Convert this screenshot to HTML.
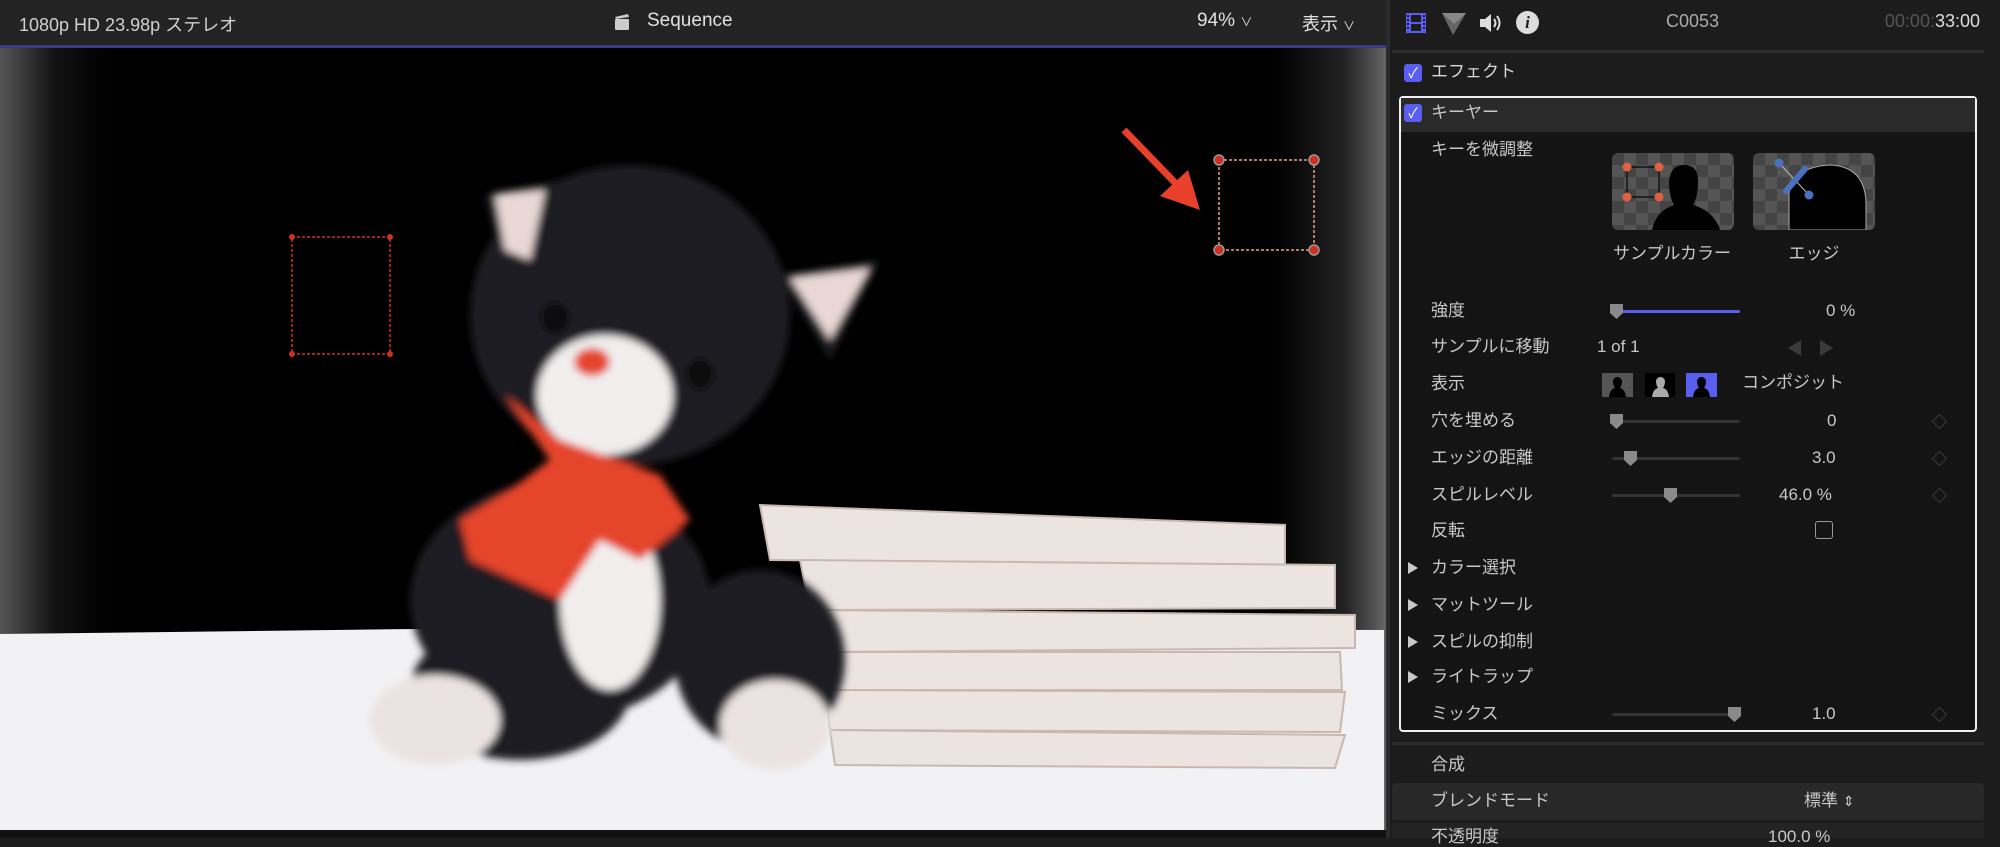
<!DOCTYPE html>
<html><head><meta charset="utf-8"><style>
*{margin:0;padding:0;box-sizing:border-box}
body{width:2000px;height:838px;background:#1c1c1c;overflow:hidden;position:relative;font-family:"Liberation Sans","Noto Sans CJK JP",sans-serif;color:#d8d8d8}
.a{position:absolute;white-space:nowrap}
.t{font-size:17px;color:#c8c8c8;line-height:20px}
.sl{position:absolute;height:3px;background:#333;border-radius:2px}
.th{position:absolute;width:13px;height:15px;background:#8a8a8a;clip-path:polygon(0 0,100% 0,100% 60%,50% 100%,0 60%)}
.dm{position:absolute;width:11px;height:11px;border:1px solid #3a3a3a;transform:rotate(45deg)}
.tri{position:absolute;width:0;height:0;border-top:6px solid transparent;border-bottom:6px solid transparent;border-left:10px solid #c8c8c8}
.cb{position:absolute;width:18px;height:18px;background:#5a5ef0;border-radius:3px;color:#fff;font-size:14px;line-height:18px;text-align:center}
</style></head><body>
<!-- top bar -->
<div class="a" style="left:0;top:0;width:1386px;height:44px;background:#232323"></div>
<div class="a" style="left:0;top:45px;width:1386px;height:3px;background:#3c3a80"></div>
<div class="a" style="left:19px;top:11px;font-size:18px;color:#d0d0d0">1080p HD 23.98p ステレオ</div>
<svg class="a" style="left:614px;top:13px" width="16" height="18"><rect x="1" y="6" width="14" height="11" rx="1" fill="#ccc"/><path d="M1 4 L14 1 L15 4 L2 6Z" fill="#ccc"/></svg>
<div class="a" style="left:647px;top:10px;font-size:19px;color:#e0e0e0">Sequence</div>
<div class="a" style="left:1197px;top:10px;font-size:19px;color:#e0e0e0">94% <span style="font-size:12px">∨</span></div>
<div class="a" style="left:1302px;top:10px;font-size:18px;color:#e0e0e0">表示 <span style="font-size:12px">∨</span></div>
<!-- video -->
<svg class="a" style="left:0;top:48px" width="1386" height="782" viewBox="0 48 1386 782">
<defs>
<linearGradient id="lg" x1="0" x2="1"><stop offset="0" stop-color="#555"/><stop offset="0.04" stop-color="#111"/><stop offset="0.08" stop-color="#000"/><stop offset="0.92" stop-color="#000"/><stop offset="0.97" stop-color="#222"/><stop offset="1" stop-color="#666"/></linearGradient>
<filter id="bl"><feGaussianBlur stdDeviation="4"/></filter>
</defs>
<rect x="0" y="48" width="1386" height="782" fill="url(#lg)"/>
<polygon points="0,634 500,628 1384,630 1384,830 0,830" fill="#f2f2f4"/>
<g fill="#ece4e0" stroke="#c8b8b0" stroke-width="2">
<polygon points="760,505 1285,525 1285,565 770,560"/>
<polygon points="800,560 1335,565 1335,608 810,610"/>
<polygon points="815,610 1355,615 1355,648 820,652"/>
<polygon points="820,652 1340,652 1342,690 825,690"/>
<polygon points="825,690 1345,692 1340,732 830,730"/>
<polygon points="830,730 1345,735 1335,768 835,765"/>
</g>
<g filter="url(#bl)">
<ellipse cx="560" cy="600" rx="150" ry="120" fill="#1b1c20"/>
<ellipse cx="520" cy="690" rx="110" ry="70" fill="#1b1c20"/>
<ellipse cx="760" cy="660" rx="85" ry="90" fill="#1b1c20"/>
<ellipse cx="630" cy="315" rx="160" ry="150" fill="#1e1f24"/>
<polygon points="485,195 560,180 540,270 500,260" fill="#1e1f24"/>
<polygon points="495,195 545,190 530,260 505,250" fill="#e9d8d6"/>
<polygon points="780,275 880,260 830,360" fill="#1e1f24"/>
<polygon points="790,278 870,268 830,340" fill="#e9d8d6"/>
<ellipse cx="605" cy="395" rx="68" ry="60" fill="#f2eeee"/>
<ellipse cx="610" cy="600" rx="50" ry="90" fill="#f2eeee"/>
<ellipse cx="592" cy="362" rx="18" ry="14" fill="#e5452c"/>
<ellipse cx="555" cy="318" rx="14" ry="16" fill="#111"/>
<ellipse cx="700" cy="374" rx="14" ry="16" fill="#111"/>
<polygon points="505,395 560,440 660,475 690,520 640,560 600,540 560,600 470,560 460,520 510,490 550,460" fill="#e5452c"/>
<ellipse cx="435" cy="720" rx="65" ry="45" fill="#ebe3e2"/>
<ellipse cx="775" cy="725" rx="55" ry="45" fill="#ebe3e2"/>
</g>
<rect x="292" y="237" width="98" height="117" fill="none" stroke="#d03020" stroke-width="1.5" stroke-dasharray="3 2"/>
<g fill="#d03020"><circle cx="292" cy="237" r="3"/><circle cx="390" cy="237" r="3"/><circle cx="292" cy="354" r="3"/><circle cx="390" cy="354" r="3"/></g>
<rect x="1219" y="160" width="95" height="90" fill="none" stroke="#e8a090" stroke-width="1.5" stroke-dasharray="3 2"/>
<g fill="#d03020" stroke="#999" stroke-width="1.5"><circle cx="1219" cy="160" r="5"/><circle cx="1314" cy="160" r="5"/><circle cx="1219" cy="250" r="5"/><circle cx="1314" cy="250" r="5"/></g>
<line x1="1124" y1="130" x2="1185" y2="193" stroke="#e8402a" stroke-width="7"/>
<polygon points="1200,210 1160,196 1188,170" fill="#e8402a"/>
</svg>
<div class="a" style="left:0;top:830px;width:1386px;height:8px;background:#111"></div>
<div class="a" style="left:1386px;top:0;width:4px;height:838px;background:#2a2a2a"></div>
<!-- panel header -->
<svg class="a" style="left:1405px;top:12px" width="22" height="22"><rect x="1" y="1" width="20" height="20" fill="#5a5ef0"/><g fill="#1c1c1c"><rect x="6" y="3" width="10" height="7"/><rect x="6" y="12" width="10" height="7"/><rect x="2" y="3" width="2" height="2"/><rect x="2" y="7" width="2" height="2"/><rect x="2" y="11" width="2" height="2"/><rect x="2" y="15" width="2" height="2"/><rect x="18" y="3" width="2" height="2"/><rect x="18" y="7" width="2" height="2"/><rect x="18" y="11" width="2" height="2"/><rect x="18" y="15" width="2" height="2"/></g></svg>
<svg class="a" style="left:1441px;top:12px" width="26" height="24"><polygon points="1,1 25,1 12,23" fill="#666"/><polygon points="1,1 25,1 13,12" fill="#888"/></svg>
<svg class="a" style="left:1478px;top:12px" width="26" height="22"><polygon points="2,7 7,7 13,2 13,20 7,15 2,15" fill="#ddd"/><path d="M16 7 Q19 11 16 15 M19 4 Q24 11 19 18" stroke="#ddd" stroke-width="2" fill="none"/></svg>
<div class="a" style="left:1516px;top:11px;width:23px;height:23px;border-radius:50%;background:#ddd;color:#1c1c1c;font:italic bold 17px 'Liberation Serif',serif;text-align:center;line-height:23px">i</div>
<div class="a" style="left:1666px;top:11px;font-size:18px;color:#aaa">C0053</div>
<div class="a" style="left:1875px;top:11px;font-size:18px;color:#ddd;width:105px;text-align:right"><span style="color:#555">00:00:</span>33:00</div>
<div class="a" style="left:1392px;top:50px;width:592px;height:3px;background:#2c2c2c"></div>
<div class="cb" style="left:1404px;top:64px">✓</div>
<div class="a t" style="left:1431px;top:62px;color:#d8d8d8">エフェクト</div>
<!-- keyer box -->
<div class="a" style="left:1399px;top:96px;width:578px;height:636px;border:2px solid #f0f0f0;border-radius:4px;background:#141414"></div>
<div class="a" style="left:1401px;top:98px;width:574px;height:34px;background:#2a2a2a"></div>
<div class="cb" style="left:1404px;top:104px">✓</div>
<div class="a t" style="left:1431px;top:103px">キーヤー</div>
<div class="a t" style="left:1431px;top:140px">キーを微調整</div>
<svg class="a" style="left:1612px;top:153px" width="122" height="77"><defs><pattern id="ck" width="24" height="24" patternUnits="userSpaceOnUse"><rect width="24" height="24" fill="#555"/><rect width="12" height="12" fill="#444"/><rect x="12" y="12" width="12" height="12" fill="#444"/></pattern></defs><rect width="122" height="77" rx="6" fill="url(#ck)"/><rect x="15" y="14" width="32" height="30" fill="none" stroke="#111" stroke-width="1.5"/><g fill="#e06040"><circle cx="15" cy="14" r="4.5"/><circle cx="47" cy="14" r="4.5"/><circle cx="15" cy="44" r="4.5"/><circle cx="47" cy="44" r="4.5"/></g><path d="M40 77 Q44 58 62 52 Q57 44 57 28 Q59 12 72 12 Q86 12 86 28 Q86 44 81 52 Q102 58 108 77Z" fill="#000"/></svg>
<svg class="a" style="left:1753px;top:153px" width="122" height="77"><rect width="122" height="77" rx="6" fill="url(#ck)"/><path d="M36 77 L36 40 Q42 13 78 12 Q112 14 113 50 L113 77Z" fill="#000" stroke="#aaa" stroke-width="1"/><line x1="26" y1="10" x2="56" y2="42" stroke="#bbb" stroke-width="1"/><line x1="33" y1="38" x2="52" y2="16" stroke="#4a70c0" stroke-width="6" stroke-linecap="round"/><circle cx="26" cy="10" r="4.5" fill="#4a70c0"/><circle cx="56" cy="42" r="4.5" fill="#4a70c0"/></svg>
<div class="a t" style="left:1611px;top:244px;width:122px;text-align:center">サンプルカラー</div>
<div class="a t" style="left:1753px;top:244px;width:122px;text-align:center">エッジ</div>
<div class="a t" style="left:1431px;top:301px">強度</div>
<div class="sl" style="left:1612px;top:310px;width:128px;background:#5a5ef0"></div>
<div class="th" style="left:1610px;top:304px"></div>
<div class="a t" style="left:1826px;top:301px">0 %</div>
<div class="a t" style="left:1431px;top:337px">サンプルに移動</div>
<div class="a t" style="left:1597px;top:337px">1 of 1</div>
<div class="a" style="left:1788px;top:340px;border-top:8px solid transparent;border-bottom:8px solid transparent;border-right:13px solid #3a3a3a"></div>
<div class="a" style="left:1820px;top:340px;border-top:8px solid transparent;border-bottom:8px solid transparent;border-left:13px solid #3a3a3a"></div>
<div class="a t" style="left:1431px;top:374px">表示</div>
<div class="a" style="left:1602px;top:373px;width:31px;height:24px;background:#555"></div>
<div class="a" style="left:1645px;top:373px;width:30px;height:24px;background:#000"></div>
<div class="a" style="left:1686px;top:373px;width:31px;height:24px;background:#5a5ef0"></div>
<svg class="a" style="left:1602px;top:373px" width="116" height="24"><g><path d="M7 24 Q8 16 13 15 Q11 12 11 8 Q12 4 15.5 4 Q19 4 20 8 Q20 12 18 15 Q23 16 24 24Z" fill="#000"/><path d="M50 24 Q51 16 56 15 Q54 12 54 8 Q55 4 58.5 4 Q62 4 63 8 Q63 12 61 15 Q66 16 67 24Z" fill="#aaa"/><path d="M91 24 Q92 16 97 15 Q95 12 95 8 Q96 4 99.5 4 Q103 4 104 8 Q104 12 102 15 Q107 16 108 24Z" fill="#000"/></g></svg>
<div class="a t" style="left:1742px;top:373px">コンポジット</div>
<div class="a t" style="left:1431px;top:411px">穴を埋める</div>
<div class="sl" style="left:1612px;top:420px;width:128px"></div><div class="th" style="left:1610px;top:414px"></div>
<div class="a t" style="left:1827px;top:411px">0</div><div class="dm" style="left:1934px;top:416px"></div>
<div class="a t" style="left:1431px;top:448px">エッジの距離</div>
<div class="sl" style="left:1612px;top:457px;width:128px"></div><div class="th" style="left:1624px;top:451px"></div>
<div class="a t" style="left:1812px;top:448px">3.0</div><div class="dm" style="left:1934px;top:453px"></div>
<div class="a t" style="left:1431px;top:485px">スピルレベル</div>
<div class="sl" style="left:1612px;top:494px;width:128px"></div><div class="th" style="left:1664px;top:488px"></div>
<div class="a t" style="left:1779px;top:485px">46.0 %</div><div class="dm" style="left:1934px;top:490px"></div>
<div class="a t" style="left:1431px;top:521px">反転</div>
<div class="a" style="left:1815px;top:521px;width:18px;height:18px;border:1.5px solid #999;border-radius:3px"></div>
<div class="tri" style="left:1408px;top:562px"></div><div class="a t" style="left:1431px;top:558px">カラー選択</div>
<div class="tri" style="left:1408px;top:599px"></div><div class="a t" style="left:1431px;top:595px">マットツール</div>
<div class="tri" style="left:1408px;top:636px"></div><div class="a t" style="left:1431px;top:632px">スピルの抑制</div>
<div class="tri" style="left:1408px;top:671px"></div><div class="a t" style="left:1431px;top:667px">ライトラップ</div>
<div class="a t" style="left:1431px;top:704px">ミックス</div>
<div class="sl" style="left:1612px;top:713px;width:128px"></div><div class="th" style="left:1728px;top:707px"></div>
<div class="a t" style="left:1812px;top:704px">1.0</div><div class="dm" style="left:1934px;top:709px"></div>
<div class="a" style="left:1392px;top:742px;width:592px;height:3px;background:#2c2c2c"></div>
<div class="a t" style="left:1431px;top:755px">合成</div>
<div class="a" style="left:1392px;top:783px;width:592px;height:37px;background:#282828;border-radius:4px"></div>
<div class="a t" style="left:1431px;top:791px">ブレンドモード</div>
<div class="a t" style="left:1804px;top:791px">標準 <span style="font-size:14px">⇕</span></div>
<div class="a" style="left:1392px;top:823px;width:592px;height:15px;background:#232323"></div>
<div class="a t" style="left:1431px;top:827px">不透明度</div>
<div class="a t" style="left:1768px;top:827px">100.0 %</div>
</body></html>
